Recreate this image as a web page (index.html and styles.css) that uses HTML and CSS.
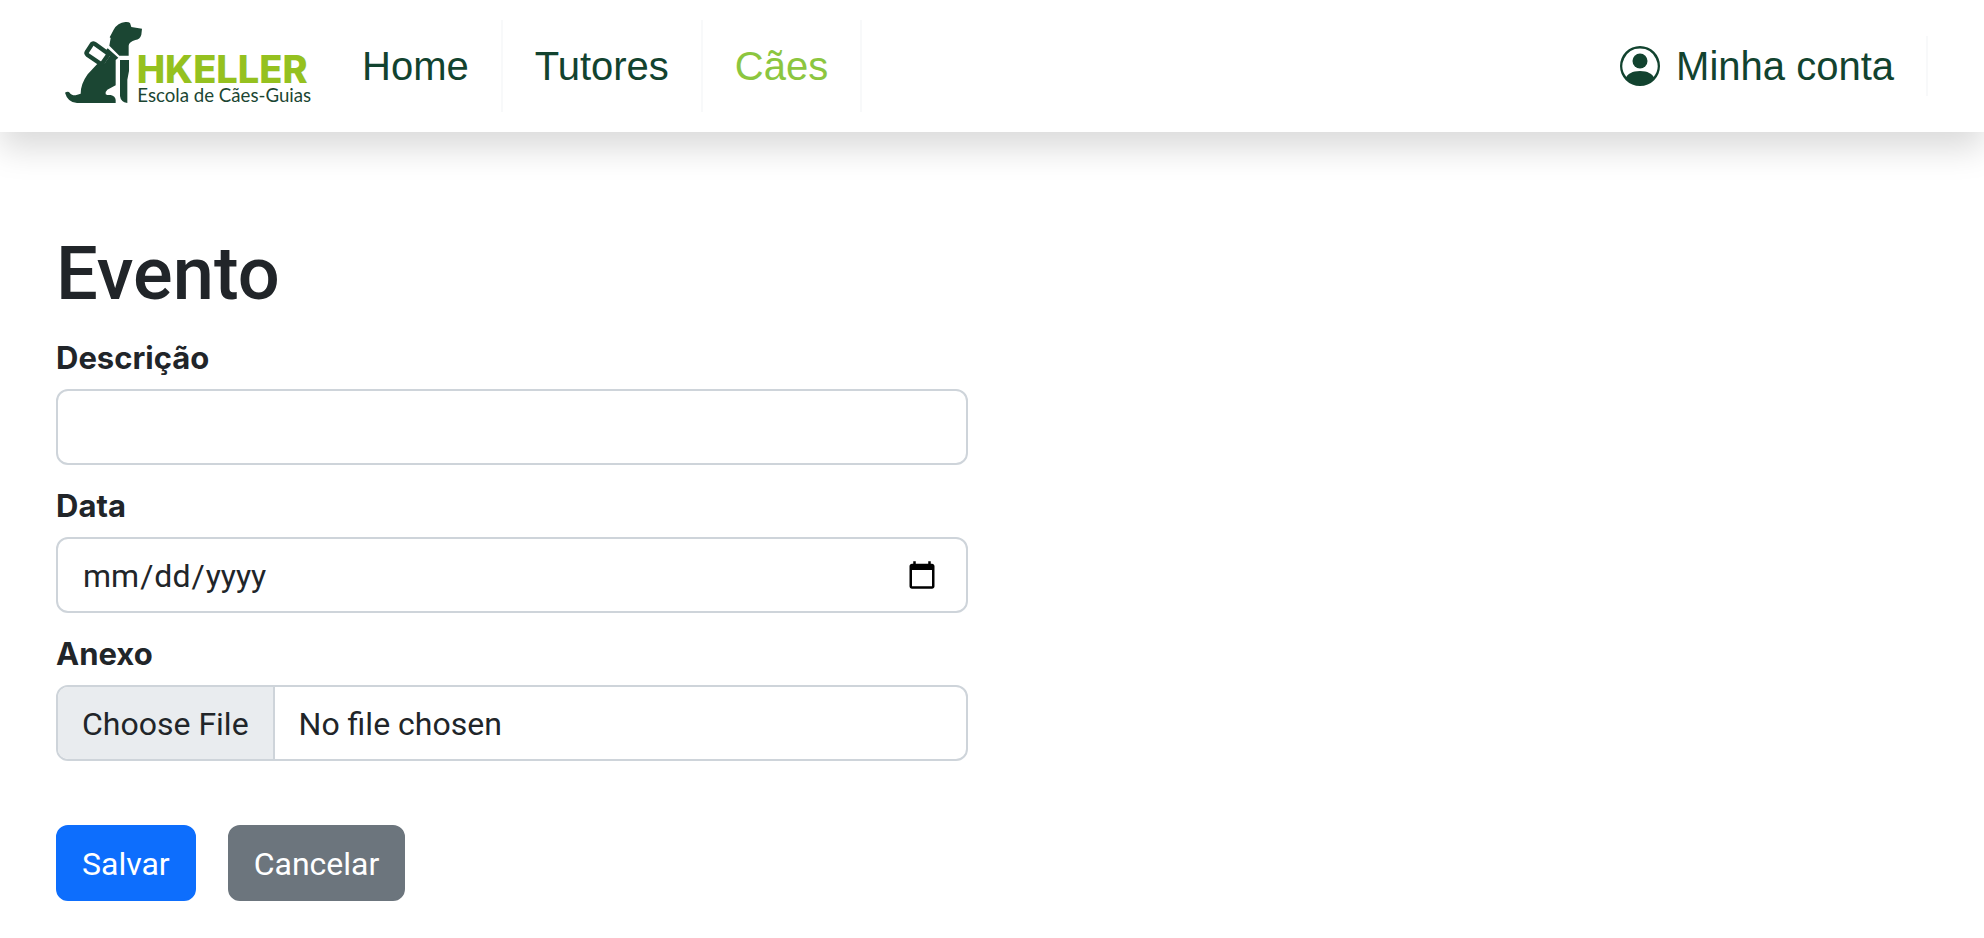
FILE: index.html
```html
<!DOCTYPE html>
<html lang="pt-BR">
<head>
  <meta charset="utf-8">
  <title>Evento - HKeller</title>
  <link rel="stylesheet" href="styles.css">
</head>
<body>
  <header class="navbar">
    <a class="brand" href="#" aria-label="HKeller Escola de Cães-Guias">
      <svg class="brand-logo" viewBox="0 3 840 330">
        <g fill="#1b4633">
          <path d="M178 107 L182 84 L179 82 L191 59 Q203 38 226 36 Q236 35 240 39 L244 51 L276 56 L274 74 Q270 88 256 90 L248 93 Q237 98 236 107 V137 H208 Z"/>
          <path d="M173 115 L205 143 L197 150 V226 L172 239 Q165 245 167 253 L172 255 H182 Q196 258 197 270 V279 H81 Q53 277 45 248 Q52 243 57 246 Q64 257 77 256 L92 251 Q92 222 113 193 L141 163 L150 158 L164 160 L180 137 L166 123 Z"/>
          <path d="M210 150 H237 V183 L232 209 V279 Q212 276 210 258 Z"/>
        </g>
        <path d="M126 102 Q131 98 136 103 L171 128 Q177 132 172 138 L158 158 Q153 163 147 158 L113 135 Q107 130 111 125 Z" fill="#fff" stroke="#1b4633" stroke-width="13"/>
        <text class="brand-name" x="260" y="219">HKELLER</text>
        <text class="brand-tagline" x="262" y="277">Escola de Cães-Guias</text>
      </svg>
    </a>
    <nav class="nav">
      <a class="nav-link" href="#">Home</a>
      <a class="nav-link" href="#">Tutores</a>
      <a class="nav-link active" href="#" aria-current="page">Cães</a>
    </nav>
    <a class="account" href="#">
      <svg class="account-icon" viewBox="0 0 16 16" fill="currentColor" aria-hidden="true">
        <path d="M11 6a3 3 0 1 1-6 0 3 3 0 0 1 6 0"/>
        <path fill-rule="evenodd" d="M0 8a8 8 0 1 1 16 0A8 8 0 0 1 0 8m8-7a7 7 0 0 0-5.468 11.37C3.242 11.226 4.805 10 8 10s4.757 1.225 5.468 2.37A7 7 0 0 0 8 1"/>
      </svg>
      <span>Minha conta</span>
    </a>
  </header>
  <main class="content">
    <form class="event-form">
      <h1 class="title">Evento</h1>
      <div class="field">
        <label class="label" for="descricao">Descrição</label>
        <input class="control" id="descricao" type="text">
      </div>
      <div class="field">
        <label class="label" for="data">Data</label>
        <input class="control" id="data" type="date" lang="en-US">
      </div>
      <div class="field">
        <label class="label" for="anexo">Anexo</label>
        <input class="control" id="anexo" type="file">
      </div>
      <div class="actions">
        <button class="btn btn-primary" type="button">Salvar</button>
        <button class="btn btn-secondary" type="button">Cancelar</button>
      </div>
    </form>
  </main>
</body>
</html>
```

FILE: styles.css
```css
* {
  box-sizing: border-box;
}

body {
  margin: 0;
  background: #fff;
  color: #212529;
  font-family: Roboto, "Liberation Sans", sans-serif;
  font-size: 32px;
  line-height: 48px;
}

.navbar {
  display: flex;
  align-items: center;
  padding: 11px 56px 11px 50px;
  box-shadow: 0 16px 32px rgba(0, 0, 0, 0.15);
  font-family: "Liberation Sans", Arial, sans-serif;
  font-size: 40px;
  line-height: 60px;
}

.brand-logo {
  display: block;
  width: 280px;
  height: 110px;
}

.brand-name {
  fill: #95c11f;
  font-family: Inter, sans-serif;
  font-size: 114px;
  font-weight: 800;
}

.brand-tagline {
  fill: #1b4633;
  font-family: Lato, sans-serif;
  font-size: 56px;
}

.nav {
  display: flex;
}

.nav-link,
.account {
  border-right: 2px solid #f8f9fa;
  color: #12432f;
  text-decoration: none;
}

.nav-link {
  padding: 16px 32px;
}

.nav-link.active {
  color: #8cc63f;
}

.account {
  display: flex;
  align-items: center;
  gap: 16px;
  margin-left: auto;
  padding-right: 32px;
}

.account-icon {
  width: 40px;
  height: 40px;
}

.content {
  padding: 97px 32px 32px;
}

.event-form {
  width: 50%;
  padding: 0 24px;
}

.title {
  margin: 0 0 15px;
  font-size: 74px;
  font-weight: 500;
  line-height: 90px;
}

.field {
  margin-bottom: 17px;
}

.label {
  display: block;
  margin-bottom: 7px;
  font-family: Inter, "Liberation Sans", sans-serif;
  font-size: 31px;
  font-weight: 700;
}

.control {
  display: block;
  width: 100%;
  height: 76px;
  padding: 13px 24px 11px;
  border: 2px solid #ced4da;
  border-radius: 12px;
  background: #fff;
  color: #212529;
  font: inherit;
}

.control::-webkit-calendar-picker-indicator {
  margin-right: 2px;
}

.control[type="file"] {
  overflow: hidden;
}

.control::file-selector-button {
  margin: -13px 24px -11px -24px;
  padding: 13px 24px 11px;
  border: 0 solid #ced4da;
  border-right-width: 2px;
  background: #e9ecef;
  color: #212529;
  font: inherit;
}

.actions {
  display: flex;
  gap: 32px;
  margin-top: 64px;
}

.btn {
  padding: 13px 24px 11px;
  border: 2px solid transparent;
  border-radius: 12px;
  color: #fff;
  font: inherit;
}

.btn-primary {
  border-color: #0d6efd;
  background: #0d6efd;
}

.btn-secondary {
  border-color: #6c757d;
  background: #6c757d;
}
```
